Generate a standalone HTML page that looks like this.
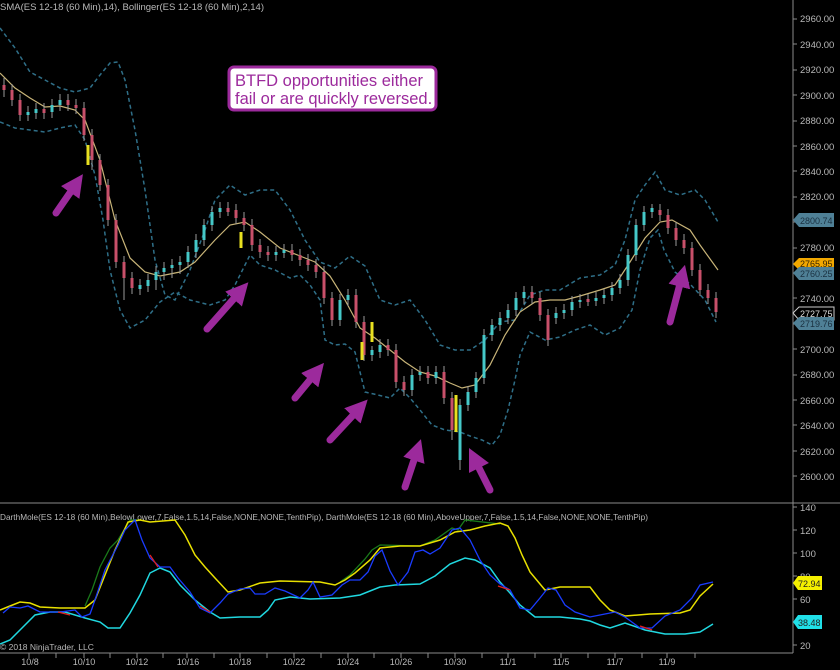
<!DOCTYPE html>
<html><head><meta charset="utf-8"><style>
html,body{margin:0;padding:0;background:#000;width:840px;height:670px;overflow:hidden}
svg{display:block}
text{font-family:"Liberation Sans",sans-serif}
</style></head><body>
<svg width="840" height="670" viewBox="0 0 840 670" xmlns="http://www.w3.org/2000/svg">
<defs>
<marker id="ah" viewBox="0 0 4 4" markerWidth="3.2" markerHeight="3.2" refX="1.2" refY="2" orient="auto">
<path d="M0,0 L4,2 L0,4 z" fill="#9c2a9c"/></marker>
</defs>
<rect width="840" height="670" fill="#000"/>
<line x1="793" y1="0" x2="793" y2="653" stroke="#8a8a8a"/>
<line x1="0" y1="503" x2="840" y2="503" stroke="#8a8a8a"/>
<line x1="0" y1="653" x2="793" y2="653" stroke="#8a8a8a"/>
<text x="0" y="10" fill="#b8b8b8" font-size="9.5">SMA(ES 12-18 (60 Min),14), Bollinger(ES 12-18 (60 Min),2,14)</text>
<g fill="#b8b8b8" font-size="9.5">
<text x="800" y="22">2960.00</text><text x="800" y="48">2940.00</text><text x="800" y="73">2920.00</text>
<text x="800" y="99">2900.00</text><text x="800" y="124">2880.00</text><text x="800" y="150">2860.00</text>
<text x="800" y="175">2840.00</text><text x="800" y="200">2820.00</text>
<text x="800" y="251">2780.00</text>
<text x="800" y="302">2740.00</text>
<text x="800" y="353">2700.00</text><text x="800" y="378">2680.00</text><text x="800" y="404">2660.00</text>
<text x="800" y="429">2640.00</text><text x="800" y="455">2620.00</text><text x="800" y="480">2600.00</text>
<text x="800" y="511">140</text><text x="800" y="534">120</text><text x="800" y="557">100</text>
<text x="800" y="580">80</text><text x="800" y="603">60</text>
<text x="800" y="649">20</text>
</g>
<path d="M793 19h4M793 44h4M793 70h4M793 95h4M793 121h4M793 146h4M793 171h4M793 197h4M793 222h4M793 248h4M793 273h4M793 298h4M793 324h4M793 349h4M793 375h4M793 400h4M793 425h4M793 451h4M793 476h4M793 507h4M793 530h4M793 553h4M793 576h4M793 599h4M793 622h4M793 645h4" stroke="#8a8a8a"/>
<g font-size="9">
<path d="M793 220 l6 -7 h35 v14 h-35z" fill="#4f8096"/><text x="800" y="224" fill="#1a3040">2800.74</text>
<path d="M793 264 l6 -6 h35 v12 h-35z" fill="#f2a800"/><text x="800" y="267" fill="#332200">2765.95</text>
<path d="M793 273 l6 -6 h35 v13 h-35z" fill="#4f8096"/><text x="800" y="277" fill="#1a3040">2760.25</text>
<path d="M793 313 l6 -6 h35 v13 h-35z" fill="#000" stroke="#ccc"/><text x="800" y="317" fill="#ddd">2727.75</text>
<path d="M793 323 l6 -6 h35 v13 h-35z" fill="#4f8096"/><text x="800" y="327" fill="#1a3040">2719.76</text>
<path d="M793 583 l5 -7 h24 v14 h-24z" fill="#f5f000"/><text x="798" y="587" fill="#222">72.94</text>
<path d="M793 622 l5 -7 h24 v14 h-24z" fill="#20e0e8"/><text x="798" y="626" fill="#222">38.48</text>
</g>
<g fill="none" stroke="#2f6f88" stroke-width="1.5" stroke-dasharray="4,3">
<polyline points="0,28 15,48 30,72 45,80 60,88 75,92 90,88 100,75 110,63 118,62 125,80 135,130 145,190 155,260 165,295 175,300 190,270 205,230 215,200 230,185 245,195 260,190 275,190 290,210 305,240 320,262 335,268 350,256 365,266 380,300 395,305 410,300 425,320 440,345 455,350 470,350 485,340 500,322 515,320 530,295 545,290 560,290 580,278 600,275 615,265 625,240 635,200 645,185 655,172 665,190 680,195 695,190 705,200 718,222"/>
<polyline points="0,122 15,128 30,130 45,132 60,128 75,125 85,140 95,175 103,220 110,270 120,310 130,328 145,320 160,302 175,292 190,300 210,305 225,300 235,285 245,265 250,255 260,265 275,270 290,278 300,275 310,285 320,300 325,340 335,345 345,344 355,352 365,392 378,395 390,398 400,388 410,398 420,410 432,425 445,430 460,432 470,436 482,440 492,445 500,435 508,410 515,380 520,355 530,332 545,340 560,337 575,330 590,325 605,335 620,328 632,310 640,270 650,238 658,230 664,250 675,272 690,284 705,300 716,322"/>
</g>
<polyline fill="none" stroke="#c8b478" stroke-width="1.2" points="0,73 15,88 30,98 45,107 60,106 75,110 85,120 100,160 115,220 130,258 145,272 160,276 180,272 195,262 215,240 230,225 245,222 260,232 280,248 300,256 315,262 330,276 345,300 360,328 375,338 390,350 405,362 420,372 435,376 450,383 462,388 475,385 490,365 505,335 520,312 535,302 550,300 565,300 580,296 600,290 615,285 630,262 645,238 660,222 672,220 690,230 700,245 718,270"/>
<path stroke="#9a9a9a" stroke-width="1" fill="none" d="M4 78V97M12 84V106M20 94V121M28 106V121M36 103V119M44 103V119M52 99V118M60 94V111M68 94V111M76 99V114M84 102V141M92 129V170M100 154V191M108 179V226M116 214V268M124 256V300M132 272V294M140 279V295M148 274V292M156 266V290M164 262V280M172 259V278M180 256V274M188 246V268M196 234V258M204 219V246M212 206V231M220 202V218M228 202V216M236 204V224M244 212V231M252 219V251M260 239V258M268 246V261M276 246V261M284 244V258M292 244V261M300 249V266M308 254V271M316 259V278M324 266V304M332 292V326M340 294V326M348 289V306M356 289V328M364 316V361M372 346V361M380 339V358M388 339V356M396 344V388M404 376V396M412 369V396M420 366V381M428 366V384M436 366V384M444 366V404M452 392V440M460 399V470M468 386V411M476 372V398M484 329V384M492 319V341M500 312V331M508 304V324M516 292V316M524 286V304M532 286V304M540 292V321M548 309V346M556 307V324M564 304V319M572 296V316M580 294V308M588 294V306M596 292V306M604 289V304M612 282V301M620 274V294M628 249V286M636 219V261M644 206V231M652 204V218M660 204V221M668 209V234M676 222V246M684 234V254M692 242V276M700 264V296M708 284V304M716 292V318"/>
<path stroke="#c8506a" stroke-width="3" fill="none" d="M4 85V90M12 90V100M20 100V115M44 109V113M68 100V105M76 105V108M84 108V135M92 135V160M100 160V185M108 185V220M116 220V262M124 262V278M132 278V288M228 208V212M236 210V218M244 218V225M252 225V245M260 245V252M268 252V255M292 250V255M300 255V260M308 260V265M316 265V272M324 272V298M332 298V320M356 295V322M364 322V355M388 345V350M396 350V382M404 382V390M428 372V378M444 372V398M452 398V430M532 292V298M540 298V315M548 315V340M588 299V302M660 210V215M668 215V228M676 228V240M684 240V248M692 248V270M700 270V290M708 290V298M716 298V312"/>
<path stroke="#45c8c8" stroke-width="3" fill="none" d="M28 112V115M36 109V113M52 105V112M60 100V105M140 285V289M148 280V286M156 272V280M164 268V272M172 265V268M180 262V265M188 252V262M196 240V252M204 225V240M212 212V225M220 208V212M276 252V255M284 250V253M340 300V320M348 295V300M372 350V355M380 345V352M412 375V390M420 372V375M436 372V378M460 405V460M468 392V405M476 378V392M484 335V378M492 325V335M500 318V325M508 310V318M516 298V310M524 292V298M556 313V318M564 310V313M572 302V310M580 300V302M596 298V301M604 295V298M612 288V295M620 280V288M628 255V280M636 225V255M644 212V225M652 208V212"/>
<path stroke="#e8e020" stroke-width="3" fill="none" d="M88 145V165M241 232V248M362 342V360M372 322V342M456 395V432"/>
<g stroke="#9c2a9c" stroke-width="7" stroke-linecap="round" fill="none" marker-end="url(#ah)">
<line x1="56" y1="213" x2="74" y2="187"/>
<line x1="207" y1="329" x2="238" y2="294"/>
<line x1="295" y1="398" x2="314" y2="375"/>
<line x1="330" y1="440" x2="357" y2="411"/>
<line x1="405" y1="487" x2="416" y2="454"/>
<line x1="490" y1="490" x2="476" y2="462"/>
<line x1="670" y1="322" x2="681" y2="280"/>
</g>
<rect x="229" y="67" width="207" height="43" rx="5" fill="#fff" stroke="#9c2a9c" stroke-width="3"/>
<text x="235" y="86" font-size="16.5" fill="#9c2a9c">BTFD opportunities either</text>
<text x="235" y="104" font-size="16.5" fill="#9c2a9c">fail or are quickly reversed.</text>
<text x="0" y="520" font-size="8.5" fill="#b8b8b8" textLength="648" lengthAdjust="spacingAndGlyphs">DarthMole(ES  12-18  (60  Min),BelowLower,7,False,1.5,14,False,NONE,NONE,TenthPip),  DarthMole(ES  12-18  (60  Min),AboveUpper,7,False,1.5,14,False,NONE,NONE,TenthPip)</text>
<polyline fill="none" stroke="#1a7a1a" stroke-width="1.3" points="85,606 92,590 100,567 110,548 118,540 130,520 140,520"/>
<polyline fill="none" stroke="#1a7a1a" stroke-width="1.3" points="340,582 350,575 365,559 372,550 380,545 420,546 435,540 452,528 458,530 465,520 500,524"/>
<polyline fill="none" stroke="#e8e000" stroke-width="1.5" points="0,610 10,606 20,602 30,603 40,607 60,608 85,608 95,600 105,575 115,550 128,522 140,520 150,522 175,520 185,535 195,555 205,567 215,578 228,592 240,590 260,583 280,581 320,582 335,585 345,580 355,573 370,560 380,548 400,546 420,546 440,540 455,532 470,530 485,526 500,523 508,526 515,538 522,555 530,572 545,590 560,587 590,587 600,600 610,610 625,616 650,614 680,613 690,610 700,596 713,584"/>
<polyline fill="none" stroke="#20d8e0" stroke-width="1.5" points="0,644 10,640 20,630 35,615 50,612 65,612 85,618 100,622 108,628 120,628 130,613 140,595 150,573 160,568 170,572 180,585 195,600 210,612 220,618 240,617 260,617 268,610 275,600 290,597 310,599 340,598 360,595 380,587 395,585 420,584 435,576 450,564 465,558 475,560 490,568 500,582 510,593 520,605 535,617 560,617 580,619 590,621 600,625 610,628 625,623 645,630 665,634 685,634 700,632 713,624"/>
<polyline fill="none" stroke="#1a3cff" stroke-width="1.3" points="3,613 10,607 20,608 28,606 40,612 60,612 75,610 82,617 90,614 95,600 105,570 118,545 125,530 135,520 142,540 150,558 160,567 170,567 178,578 190,592 200,608 210,613 220,603 228,594 240,589 250,588 255,594 265,594 275,588 285,591 300,598 308,590 313,582 320,597 332,595 342,585 350,580 360,580 368,572 375,556 382,550 390,571 398,585 408,572 415,552 423,550 430,554 440,548 452,530 460,528 470,540 480,560 490,575 500,584 510,590 520,608 530,610 540,598 548,588 556,590 565,605 575,612 590,617 605,614 615,612 625,617 640,628 652,628 665,616 680,610 692,598 700,585 713,582"/>
<path fill="none" stroke="#e02020" stroke-width="1.3" d="M58 612L70 615M150 555L158 567M200 606L210 612M498 586L510 590M640 626L652 630"/>
<text x="0" y="650" font-size="8.5" fill="#b8b8b8">© 2018 NinjaTrader, LLC</text>
<path stroke="#8a8a8a" d="M29 653v5M56 653v5M84 653v5M110 653v5M137 653v5M163 653v5M187 653v5M214 653v5M240 653v5M267 653v5M294 653v5M321 653v5M348 653v5M374 653v5M401 653v5M428 653v5M455 653v5M482 653v5M508 653v5M535 653v5M561 653v5M588 653v5M615 653v5M642 653v5M667 653v5M695 653v5"/>
<g font-size="9" fill="#b8b8b8" text-anchor="middle">
<text x="30" y="665">10/8</text><text x="84" y="665">10/10</text><text x="137" y="665">10/12</text>
<text x="188" y="665">10/16</text><text x="240" y="665">10/18</text><text x="294" y="665">10/22</text>
<text x="348" y="665">10/24</text><text x="401" y="665">10/26</text><text x="455" y="665">10/30</text>
<text x="508" y="665">11/1</text><text x="561" y="665">11/5</text><text x="615" y="665">11/7</text>
<text x="667" y="665">11/9</text>
</g>
</svg>
</body></html>
